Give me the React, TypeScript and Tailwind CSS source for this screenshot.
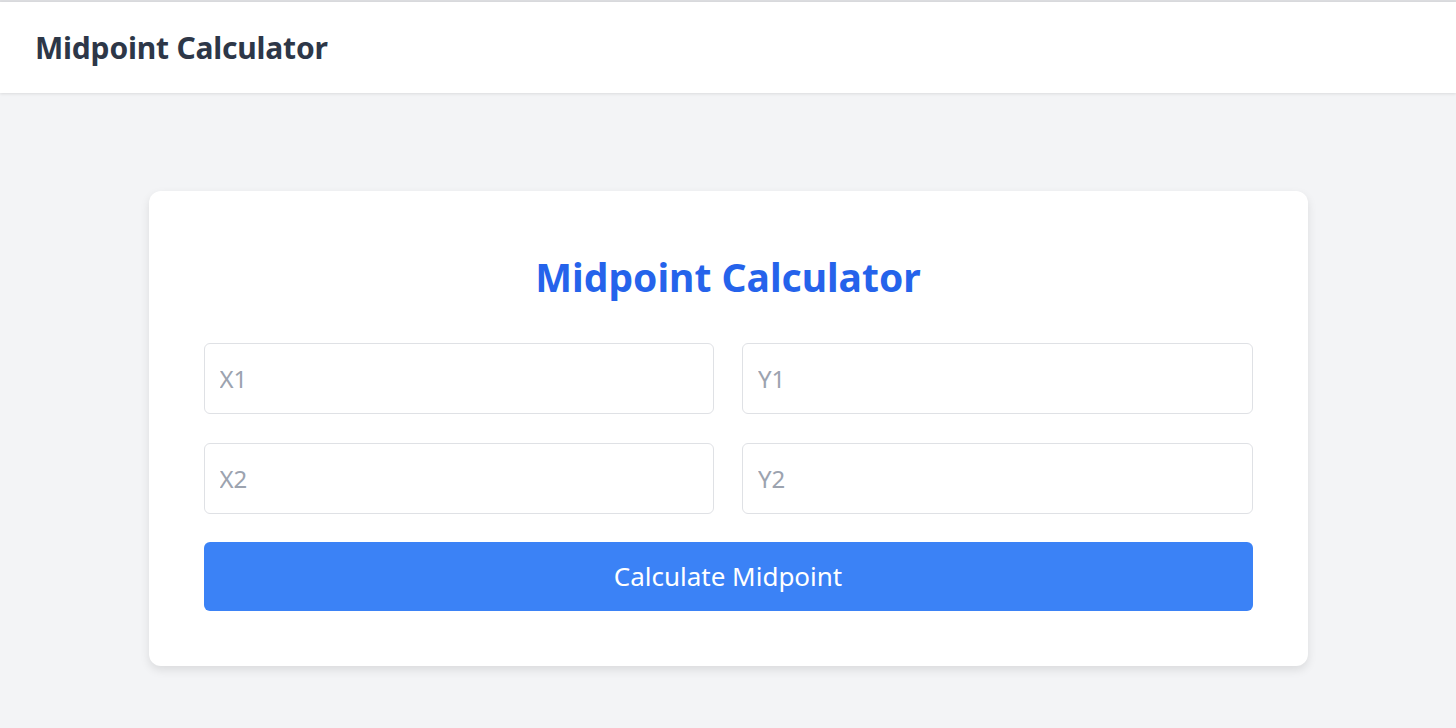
import { useState } from "react";

const font = { fontFamily: '"Noto Sans", "Open Sans", sans-serif' };

export default function App() {
  const [x1, setX1] = useState("");
  const [y1, setY1] = useState("");
  const [x2, setX2] = useState("");
  const [y2, setY2] = useState("");

  return (
    <div className="min-h-[728px] bg-[#f3f4f6] border-t-2 border-[#dcdde0]" style={font}>
      {/* Header */}
      <header className="h-[91px] bg-white shadow-[0_1px_3px_rgba(0,0,0,0.1)] flex items-center px-[35px]">
        <h1 className="text-[30px] font-bold text-[#2d3748] tracking-[-0.2px]">Midpoint Calculator</h1>
      </header>

      {/* Card */}
      <main className="pt-[98px] flex justify-center">
        <div className="w-[1159px] bg-white rounded-xl shadow-[0_4px_10px_rgba(0,0,0,0.1)] px-[55px] pt-[55px] pb-[55px]">
          <h2 className="text-center text-[39px] font-bold text-[#2563eb] leading-[62px] mb-[35px]">
            Midpoint Calculator
          </h2>
          <div className="grid grid-cols-2 gap-x-[28px] gap-y-[29px]">
            <input
              value={x1}
              onChange={(e) => setX1(e.target.value)}
              placeholder="X1"
              className="h-[71px] border border-[#dfe1e5] rounded-md px-[15px] text-[24px] text-gray-700 placeholder:text-[#9ca3af] outline-none"
            />
            <input
              value={y1}
              onChange={(e) => setY1(e.target.value)}
              placeholder="Y1"
              className="h-[71px] border border-[#dfe1e5] rounded-md px-[15px] text-[24px] text-gray-700 placeholder:text-[#9ca3af] outline-none"
            />
            <input
              value={x2}
              onChange={(e) => setX2(e.target.value)}
              placeholder="X2"
              className="h-[71px] border border-[#dfe1e5] rounded-md px-[15px] text-[24px] text-gray-700 placeholder:text-[#9ca3af] outline-none"
            />
            <input
              value={y2}
              onChange={(e) => setY2(e.target.value)}
              placeholder="Y2"
              className="h-[71px] border border-[#dfe1e5] rounded-md px-[15px] text-[24px] text-gray-700 placeholder:text-[#9ca3af] outline-none"
            />
          </div>
          <button className="mt-[28px] w-full h-[69px] bg-[#3b82f6] text-white text-[26px] rounded-md">
            Calculate Midpoint
          </button>
        </div>
      </main>
    </div>
  );
}
